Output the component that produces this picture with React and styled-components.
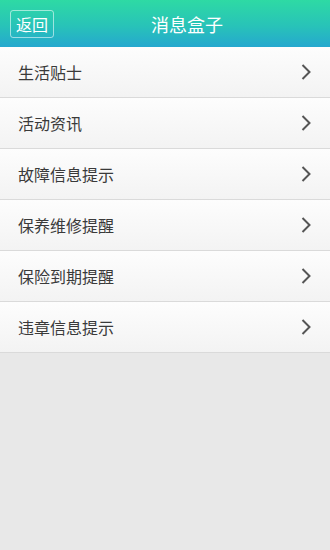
import React from 'react';
import styled, {createGlobalStyle} from 'styled-components';

const GlobalStyle = createGlobalStyle`
  html, body {
    margin: 0;
    padding: 0;
    background: #e8e8e8;
  }
  body {
    font-family: "Noto Sans CJK SC", "Noto Sans", sans-serif;
  }
`;

const Page = styled.div`
  width: 330px;
  min-height: 550px;
  background: #e8e8e8;
`;

const Header = styled.div`
  position: relative;
  height: 47px;
  display: flex;
  align-items: center;
  justify-content: center;
  padding-left: 44px;
  background: linear-gradient(to bottom, #2edaa4 0%, #28c3b8 55%, #25a8cf 100%);
`;

const BackButton = styled.div`
  position: absolute;
  left: 10px;
  top: 10px;
  width: 42px;
  height: 26px;
  display: flex;
  align-items: center;
  justify-content: center;
  border: 1px solid rgba(255, 255, 255, 0.55);
  border-radius: 3px;
  color: #fff;
  font-size: 16px;
  line-height: 1;
`;

const Title = styled.div`
  color: #fff;
  font-size: 18px;
  line-height: 1;
`;

const List = styled.div`
  display: flex;
  flex-direction: column;
`;

const Row = styled.div`
  height: 50px;
  display: flex;
  align-items: center;
  justify-content: space-between;
  padding: 0 18px 0 18px;
  background: linear-gradient(to bottom, #fdfdfd, #f3f3f3);
  border-bottom: 1px solid #dadada;
`;

const Label = styled.span`
  color: #3a3a3a;
  font-size: 16px;
`;

const Chevron = () => (
  <svg width="12" height="18" viewBox="0 0 12 18">
    <path d="M2.5 2 L9.5 9 L2.5 16" fill="none" stroke="#555" strokeWidth="2" />
  </svg>
);

const items = ['生活贴士', '活动资讯', '故障信息提示', '保养维修提醒', '保险到期提醒', '违章信息提示'];

export default function App() {
  return (
    <Page>
      <GlobalStyle />
      <Header>
        <BackButton>返回</BackButton>
        <Title>消息盒子</Title>
      </Header>
      <List>
        {items.map(item => (
          <Row key={item}>
            <Label>{item}</Label>
            <Chevron />
          </Row>
        ))}
      </List>
    </Page>
  );
}
